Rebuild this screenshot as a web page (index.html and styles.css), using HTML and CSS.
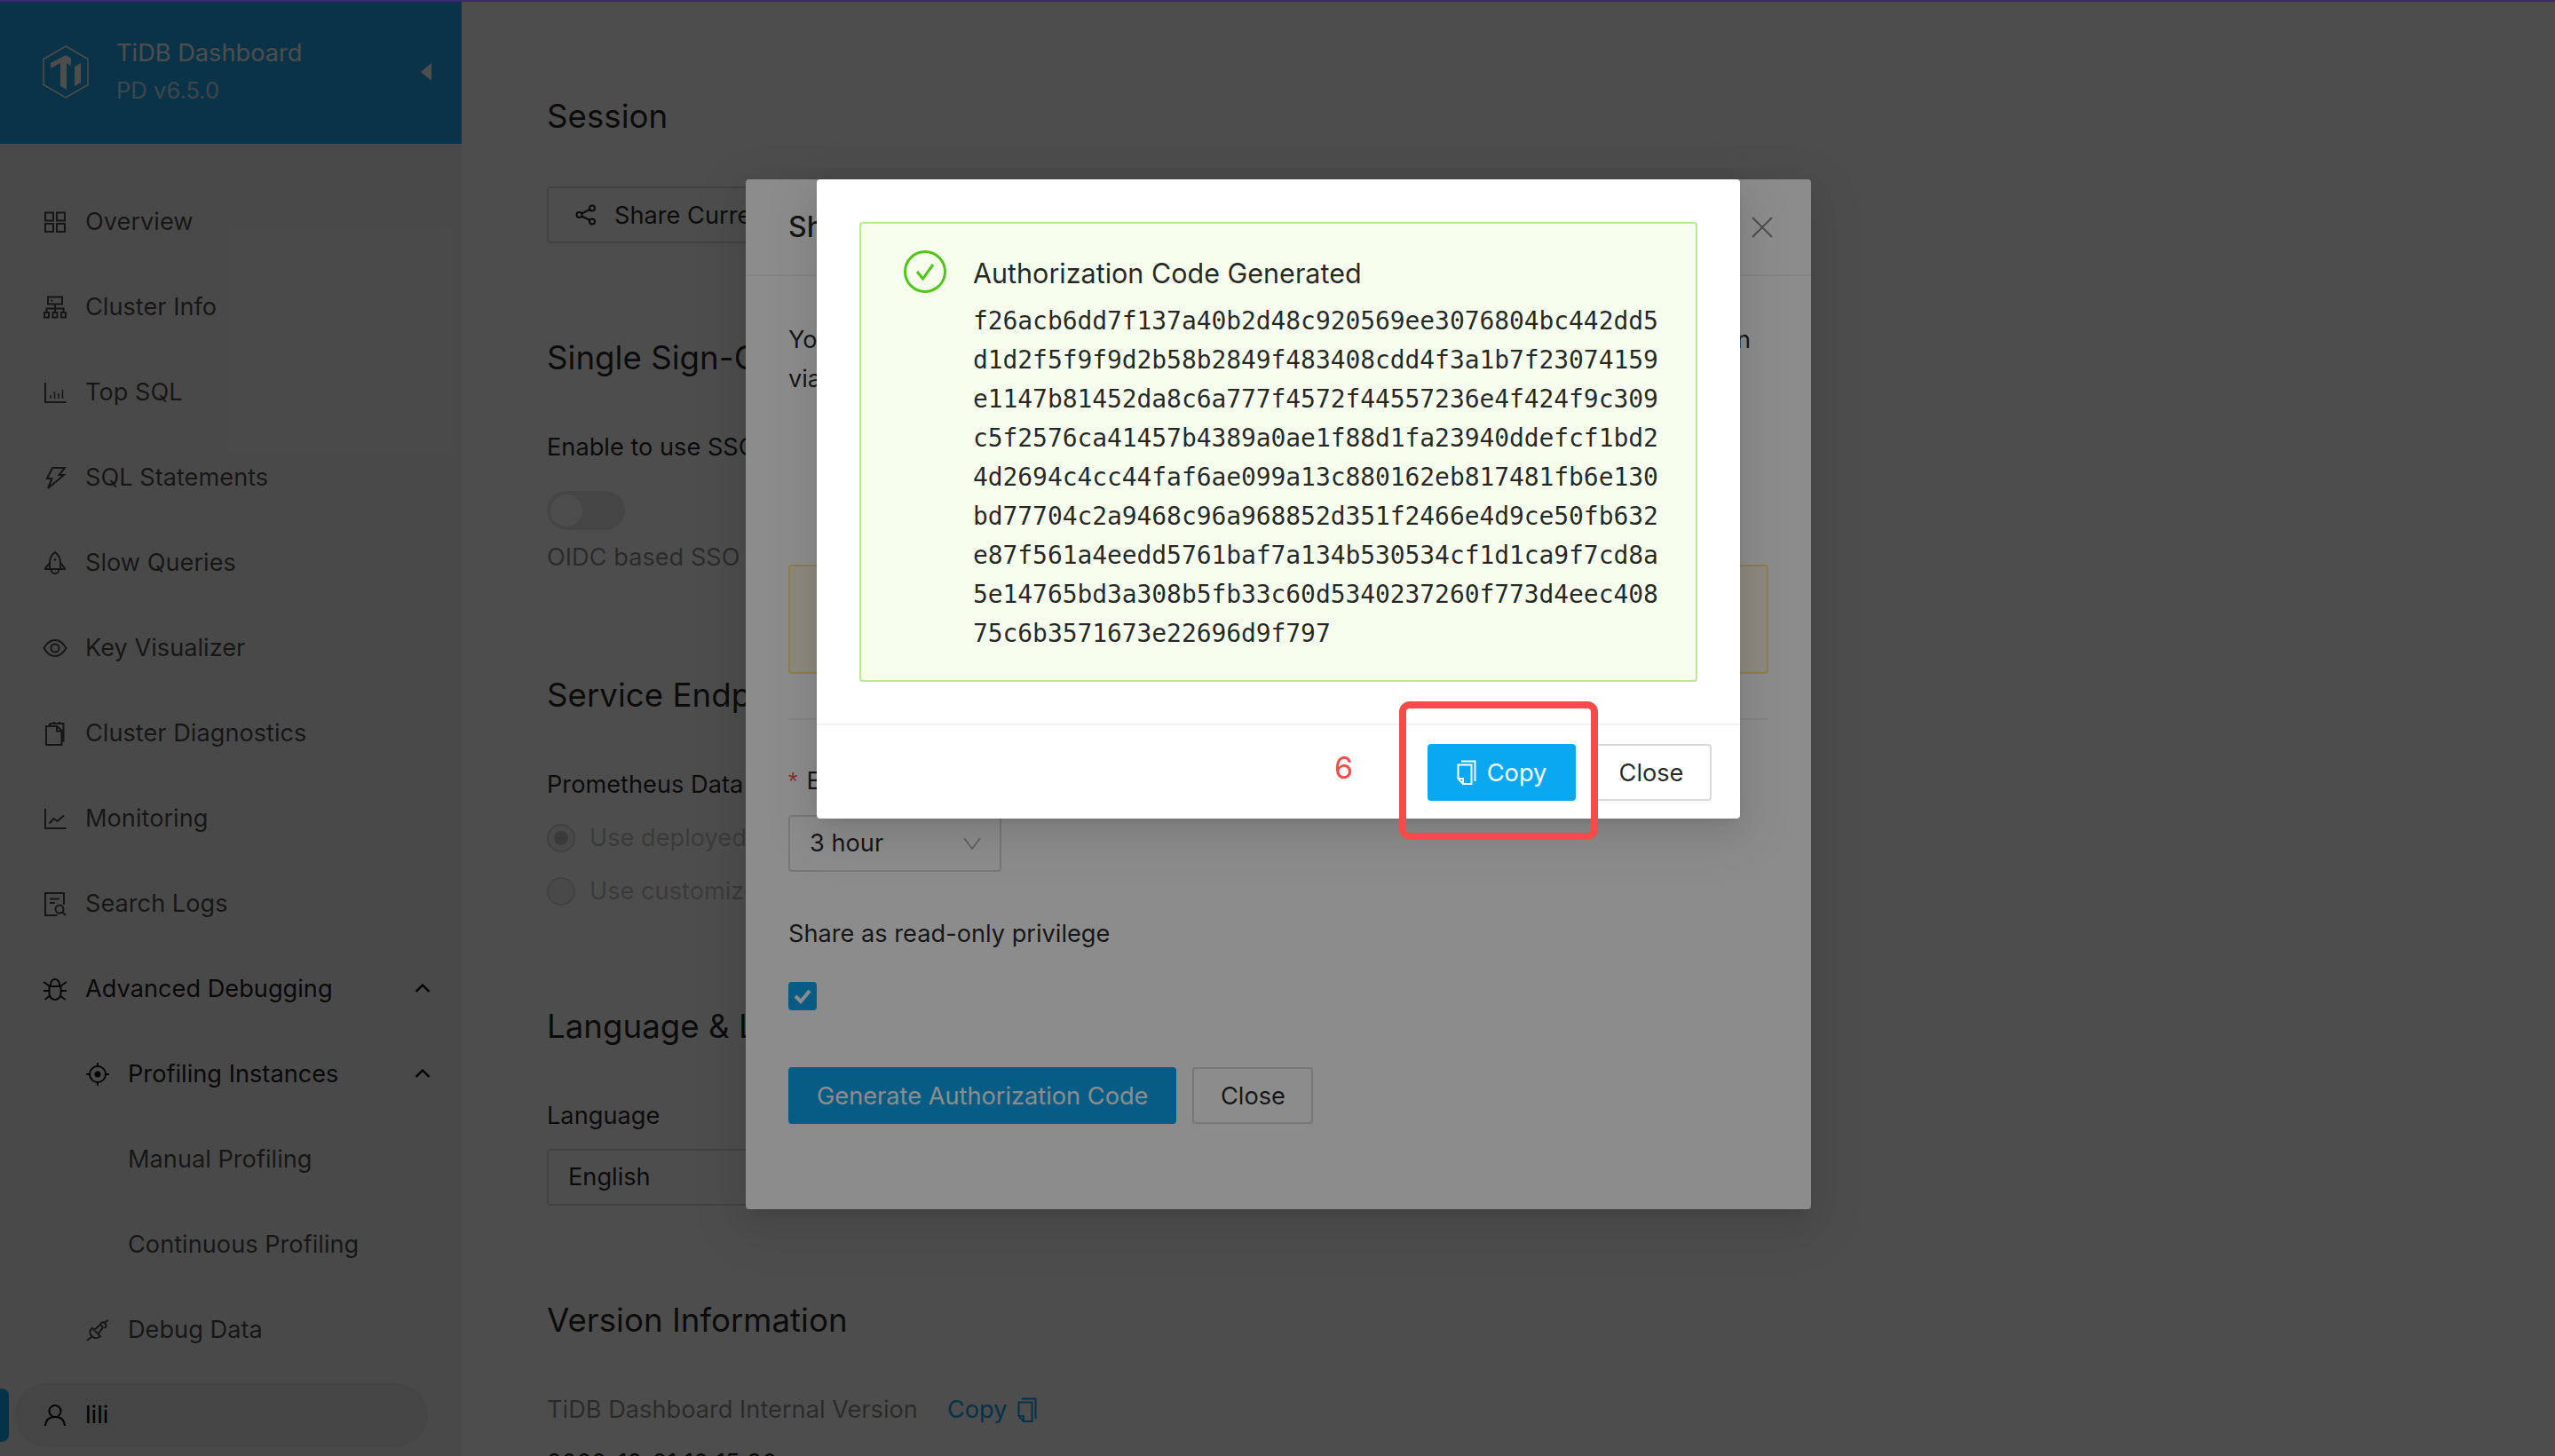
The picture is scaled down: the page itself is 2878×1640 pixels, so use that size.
FILE: index.html
```html
<!DOCTYPE html>
<html lang="en">
<head>
  <meta charset="UTF-8" />
  <title>TiDB Dashboard</title>
  <link rel="stylesheet" href="styles.css">
</head>
<body>
  <div class="app">
    <aside class="sidebar">
      <div class="brand">
        <svg class="brand-logo" viewBox="0 0 52 60">
          <path class="hex" d="M26 1 51 15.500V44.500L26 59 1 44.500V15.500Z"/>
          <path class="ti" d="M9 20 26 11 32 14.500 32 23 27 20.500V50L20 46V20L9 26ZM36 24 43 20V42L36 46Z"/>
        </svg>
        <div class="brand-text">
          <div class="brand-name">TiDB Dashboard</div>
          <div class="brand-version">PD v6.5.0</div>
        </div>
        <span class="brand-toggle"></span>
      </div>

      <nav class="menu">
        <a class="item">
          <svg class="icon" viewBox="0 0 28 28"><path d="M3 3.500h9v9H3zM16 3.500h9v9h-9zM3 16h9v9H3zM16 16h9v9h-9z"/></svg>
          Overview
        </a>
        <a class="item">
          <svg class="icon" viewBox="0 0 28 28"><path d="M6 2.500h16v8H6zM14 10.500v5M4.500 19.500v-4h19v4M14 15.500v4M2 20h5v5.500H2zM11.500 20h5v5.500h-5zM21 20h5v5.500h-5zM9.500 6.500h2"/></svg>
          Cluster Info
        </a>
        <a class="item">
          <svg class="icon" viewBox="0 0 28 28"><path d="M3 3v22h23.500"/><path class="thin" d="M9 21v-4M13.500 21v-8M18 21v-6M22.500 21v-10"/></svg>
          Top SQL
        </a>
        <a class="item">
          <svg class="icon" viewBox="0 0 28 28"><path d="M11 3h14l-6.500 8H24L6 26l4.500-11H5z"/></svg>
          SQL Statements
        </a>
        <a class="item">
          <svg class="icon" viewBox="0 0 28 28"><path d="M14 2c4 3 6 7 6 12v7H8v-7C8 9 10 5 14 2zM8 14l-5 6v1h5M20 14l5 6v1h-5M9.500 21c0 3 2 5 4.500 5s4.500-2 4.500-5"/><circle class="dot" cx="14" cy="10.500" r="1.300"/></svg>
          Slow Queries
        </a>
        <a class="item">
          <svg class="icon" viewBox="0 0 28 28"><path d="M1.500 14C5 8 9 5 14 5s9 3 12.500 9C23 20 19 23 14 23S5 20 1.500 14z"/><circle cx="14" cy="14" r="4.500"/></svg>
          Key Visualizer
        </a>
        <a class="item">
          <svg class="icon" viewBox="0 0 28 28"><path d="M4 6h12.500l5 5v16H4zM16 6v5.500h5.500M8 6V3M8 3h15.500v19.500h-2M13 3V1M19 3V1"/></svg>
          Cluster Diagnostics
        </a>
        <a class="item">
          <svg class="icon" viewBox="0 0 28 28"><path d="M3 3v22h23.500M7.500 19.500l5-5.500 4 3 7.500-6.500"/></svg>
          Monitoring
        </a>
        <a class="item">
          <svg class="icon" viewBox="0 0 28 28"><path d="M24 15V2H3v25h13.500M8 8.500h11M8 13h6"/><circle cx="19" cy="20" r="4.500"/><path d="M22.500 23.500l3.500 3.500"/></svg>
          Search Logs
        </a>
        <a class="item strong">
          <svg class="icon" viewBox="0 0 28 28"><path d="M7.500 11h13v8c0 4-3 7-6.500 7s-6.500-3-6.500-7zM9 11V9c0-3.500 2.500-6 5-6s5 2.500 5 6v2M1 6l6.500 4.500M27 6l-6.500 4.500M1 16h6.500M27 16h-6.500M2.500 26l5-4M25.500 26l-5-4"/></svg>
          Advanced Debugging
          <svg class="chevron" viewBox="0 0 18 12"><path d="M1.500 10 9 2.500 16.500 10"/></svg>
        </a>
        <a class="item strong level-two">
          <svg class="icon" viewBox="0 0 28 28"><circle cx="14" cy="14" r="9"/><circle class="dot" cx="14" cy="14" r="3.500"/><path d="M14 1v5M14 22v5M1 14h5M22 14h5"/></svg>
          Profiling Instances
          <svg class="chevron" viewBox="0 0 18 12"><path d="M1.500 10 9 2.500 16.500 10"/></svg>
        </a>
        <a class="item level-three">Manual Profiling</a>
        <a class="item level-three">Continuous Profiling</a>
        <a class="item level-two">
          <svg class="icon" viewBox="0 0 28 28"><path d="M2 26l6-5M26 3l-5 3M8 12l9 9-1.500 1c-3 2-6 1-8-1s-3-5-1-8zM14.500 18.500 20 11l-3-3-7.500 6.500M17 7c2-2 4-2 5.500-.500S24 10 22 12"/></svg>
          Debug Data
        </a>
        <a class="item selected">
          <svg class="icon" viewBox="0 0 28 28"><circle cx="14" cy="9.500" r="6.500"/><path d="M3 26c.5-6.500 4.500-10 11-10s10.500 3.500 11 10"/></svg>
          lili
        </a>
      </nav>
    </aside>

    <main class="content">
      <h2 class="heading first">Session</h2>
      <button class="btn share-btn">
        <svg class="share-icon" viewBox="0 0 24 24"><circle cx="19" cy="4.500" r="3"/><circle cx="4.500" cy="12" r="3"/><circle cx="19" cy="19.500" r="3"/><path d="M7 10.500 16.500 6M7 13.500l9.500 4.500"/></svg>
        Share Current Session
      </button>

      <h2 class="heading">Single Sign-On</h2>
      <div class="label">Enable to use SSO when sign in</div>
      <div class="toggle"><span class="knob"></span></div>
      <div class="hint">OIDC based SSO is not enabled</div>

      <h2 class="heading service">Service Endpoint</h2>
      <div class="label">Prometheus Data Source</div>
      <div class="radios">
        <div class="radio-row"><span class="radio on"></span>Use deployed address</div>
        <div class="radio-row"><span class="radio"></span>Use customized address</div>
      </div>

      <h2 class="heading language">Language &amp; Localization</h2>
      <div class="label">Language</div>
      <div class="select language-select">English</div>

      <h2 class="heading">Version Information</h2>
      <div class="label version-row">
        <span class="muted">TiDB Dashboard Internal Version</span>
        <span class="link">Copy
          <svg class="copy-icon" viewBox="0 0 22 28"><path d="M5 1.500h15.500V24M1.500 5.500h15V27H7l-5.500-6zM1.500 21H7v6"/></svg>
        </span>
      </div>
      <div class="label version-value">2022-12-21 10:15:30</div>
    </main>
  </div>

  <div class="mask"></div>

  <section class="modal share-modal">
    <header class="modal-head">
      <span>Share TiDB Dashboard</span>
      <svg class="modal-close" viewBox="0 0 24 24"><path d="M1 1l22 22M23 1 1 23"/></svg>
    </header>
    <div class="modal-body">
      <p class="intro">You can generate a shareable authorization code to let other users sign in</p>
      <p class="intro-next">via the authorization code.</p>
      <div class="warning"></div>
      <hr class="divider">
      <div class="label expire"><span class="star">*</span>Expire in</div>
      <div class="select expire-select">
        3 hour
        <svg class="select-arrow" viewBox="0 0 20 14"><path d="M1 1l9 12 9-12"/></svg>
      </div>
      <div class="label readonly">Share as read-only privilege</div>
      <span class="checkbox">
        <svg viewBox="0 0 32 32"><path d="M8 16l6 6 10-12"/></svg>
      </span>
      <div class="modal-actions">
        <button class="btn primary">Generate Authorization Code</button>
        <button class="btn close-btn">Close</button>
      </div>
    </div>
  </section>

  <div class="mask"></div>

  <section class="modal code-modal">
    <div class="code-wrap">
      <div class="success">
        <svg class="success-icon" viewBox="0 0 48 48"><circle cx="24" cy="24" r="22.500"/><path d="M15 24l6.500 8L33 16"/></svg>
        <div class="success-main">
          <div class="success-title">Authorization Code Generated</div>
          <div class="code">f26acb6dd7f137a40b2d48c920569ee3076804bc442dd5
d1d2f5f9f9d2b58b2849f483408cdd4f3a1b7f23074159
e1147b81452da8c6a777f4572f44557236e4f424f9c309
c5f2576ca41457b4389a0ae1f88d1fa23940ddefcf1bd2
4d2694c4cc44faf6ae099a13c880162eb817481fb6e130
bd77704c2a9468c96a968852d351f2466e4d9ce50fb632
e87f561a4eedd5761baf7a134b530534cf1d1ca9f7cd8a
5e14765bd3a308b5fb33c60d5340237260f773d4eec408
75c6b3571673e22696d9f797</div>
        </div>
      </div>
    </div>
    <footer class="code-footer">
      <button class="btn primary copy-btn">
        <svg class="copy-icon" viewBox="0 0 22 28"><path d="M5 1.500h15.500V24M1.500 5.500h15V27H7l-5.500-6zM1.500 21H7v6"/></svg>
        Copy
      </button>
      <button class="btn close-btn">Close</button>
    </footer>
  </section>

  <!-- annotation drawn on top of the screenshot -->
  <div class="step-number">6</div>
  <div class="step-frame"></div>
  <div class="progress"></div>
</body>
</html>
```

FILE: styles.css
```css
* {
  margin: 0;
  padding: 0;
  box-sizing: border-box;
}

html,
body {
  width: 2878px;
  height: 1640px;
  overflow: hidden;
}

body {
  background-color: #ffffff;
  color: rgba(0, 0, 0, 0.85);
  font-family: Inter, "Liberation Sans", sans-serif;
  font-size: 27.2px;
  line-height: 44px;
}

.app {
  display: flex;
  height: 1640px;
}

/* sidebar */
.sidebar {
  width: 520px;
  flex-shrink: 0;
  background-color: #f5f5f5;
}

.brand {
  display: flex;
  align-items: center;
  height: 162px;
  padding: 0 34px 0 48px;
  background-color: #24aaf0;
  color: #ffffff;
}

.brand-logo {
  width: 52px;
  height: 60px;
  margin-right: 31px;
  flex-shrink: 0;
}

.hex {
  fill: none;
  stroke: #ffffff;
  stroke-width: 1.500;
}

.ti {
  fill: #ffffff;
}

.brand-text {
  flex: 1;
}

.brand-name {
  line-height: 40px;
}

.brand-version {
  margin-top: 2px;
  line-height: 40px;
  font-size: 25.6px;
  opacity: 0.75;
}

.brand-toggle {
  width: 0;
  height: 0;
  border-top: 10px solid transparent;
  border-bottom: 10px solid transparent;
  border-right: 12px solid #ffffff;
}

.menu {
  padding-top: 52px;
}

.item {
  position: relative;
  display: flex;
  align-items: center;
  height: 72px;
  margin: 0 38px 24px 16px;
  padding-left: 32px;
  color: rgba(0, 0, 0, 0.7);
  border-radius: 36px;
}

.item.strong {
  color: rgba(0, 0, 0, 0.9);
}

.level-two {
  padding-left: 80px;
}

.level-three {
  padding-left: 128px;
}

.selected {
  color: #000000;
  background-color: #e8e8e8;
}

.selected::before {
  content: "";
  position: absolute;
  left: -16px;
  top: 6px;
  width: 10px;
  height: 60px;
  background-color: #0ba8f2;
  border-radius: 0 8px 8px 0;
}

.icon {
  width: 28px;
  height: 28px;
  margin-right: 20px;
  flex-shrink: 0;
  fill: none;
  stroke: currentColor;
  stroke-width: 2;
}

.icon .thin {
  stroke-width: 1.500;
}

.icon .dot {
  fill: currentColor;
  stroke: none;
}

.chevron {
  position: absolute;
  right: -3px;
  top: 29px;
  width: 18px;
  height: 12px;
  fill: none;
  stroke: currentColor;
  stroke-width: 2.500;
}

/* main column */
.content {
  flex: 1;
  padding-left: 96px;
}

.heading {
  height: 56px;
  margin-top: 101px;
  font-size: 36.7px;
  font-weight: 400;
  line-height: 56px;
}

.heading.first {
  margin-top: 103px;
}

.heading.service {
  margin-top: 105px;
}

.heading.language {
  margin-top: 94px;
}

.label {
  margin-top: 51px;
  white-space: nowrap;
}

.btn {
  display: inline-flex;
  align-items: center;
  justify-content: center;
  height: 64px;
  padding: 0 30px;
  background-color: #ffffff;
  border: 2px solid #d9d9d9;
  border-radius: 4px;
  box-shadow: 0 4px 0 rgba(0, 0, 0, 0.015);
  color: rgba(0, 0, 0, 0.85);
  font-family: inherit;
  font-size: 27.2px;
}

.btn.primary {
  background-color: #0ba8f2;
  border-color: #0ba8f2;
  color: #ffffff;
}

.close-btn {
  width: 136px;
  padding: 0;
}

.share-btn {
  margin-top: 51px;
  width: 420px;
  justify-content: flex-start;
  white-space: nowrap;
}

.share-icon {
  width: 24px;
  height: 24px;
  margin-right: 20px;
  fill: none;
  stroke: currentColor;
  stroke-width: 2;
}

.toggle {
  width: 88px;
  height: 44px;
  margin-top: 27px;
  padding: 4px;
  background-color: #bfbfbf;
  border-radius: 22px;
  opacity: 0.4;
}

.knob {
  display: block;
  width: 36px;
  height: 36px;
  background-color: #ffffff;
  border-radius: 50%;
}

.hint {
  margin-top: 9px;
  color: rgba(0, 0, 0, 0.45);
  white-space: nowrap;
}

.radios {
  margin-top: 8px;
}

.radio-row {
  display: flex;
  align-items: center;
  height: 60px;
  color: rgba(0, 0, 0, 0.25);
  white-space: nowrap;
}

.radio {
  display: flex;
  align-items: center;
  justify-content: center;
  width: 32px;
  height: 32px;
  margin-right: 16px;
  background-color: #f5f5f5;
  border: 2px solid #d9d9d9;
  border-radius: 50%;
}

.radio.on::after {
  content: "";
  width: 16px;
  height: 16px;
  background-color: rgba(0, 0, 0, 0.2);
  border-radius: 50%;
}

.select {
  position: relative;
  display: flex;
  align-items: center;
  height: 64px;
  padding-left: 22px;
  background-color: #ffffff;
  border: 2px solid #d9d9d9;
  border-radius: 4px;
}

.language-select {
  width: 400px;
  margin-top: 15px;
}

.select-arrow {
  position: absolute;
  right: 21px;
  top: 23px;
  width: 20px;
  height: 14px;
  fill: none;
  stroke: rgba(0, 0, 0, 0.3);
  stroke-width: 2;
}

.version-row {
  display: flex;
  gap: 33px;
}

.muted {
  color: rgba(0, 0, 0, 0.45);
}

.link {
  display: flex;
  align-items: center;
  color: #0ba8f2;
}

.link .copy-icon {
  margin-left: 12px;
}

.copy-icon {
  width: 22px;
  height: 28px;
  fill: none;
  stroke: currentColor;
  stroke-width: 2;
}

.version-value {
  margin-top: 16px;
}

/* overlays */
.mask {
  position: absolute;
  inset: 0;
  background-color: rgba(0, 0, 0, 0.45);
}

.modal {
  position: absolute;
  top: 202px;
  background-color: #ffffff;
  border-radius: 4px;
  box-shadow: 0 6px 12px -8px rgba(0, 0, 0, 0.12), 0 12px 32px 0 rgba(0, 0, 0, 0.08), 0 18px 56px 16px rgba(0, 0, 0, 0.05);
}

.share-modal {
  left: 840px;
  width: 1200px;
  height: 1160px;
}

.modal-head {
  position: relative;
  height: 109px;
  padding: 32px 48px 0;
  border-bottom: 2px solid #f0f0f0;
  font-size: 32px;
  font-weight: 500;
}

.modal-close {
  position: absolute;
  right: 43px;
  top: 42px;
  width: 24px;
  height: 24px;
  fill: none;
  stroke: rgba(0, 0, 0, 0.45);
  stroke-width: 2;
}

.modal-body {
  padding: 50px 48px 0;
}

.intro {
  width: 1084px;
  white-space: nowrap;
  text-align: justify;
  text-align-last: justify;
}

.warning {
  height: 123px;
  margin-top: 187px;
  background-color: #fffbe6;
  border: 2px solid #ffe58f;
  border-radius: 4px;
}

.divider {
  margin-top: 50px;
  border: none;
  border-top: 2px solid #f0f0f0;
}

.expire {
  margin-top: 47px;
}

.star {
  margin-right: 10px;
  color: #ff4d4f;
  font-family: "Liberation Sans", sans-serif;
}

.expire-select {
  width: 240px;
  margin-top: 16px;
}

.readonly {
  margin-top: 48px;
}

.checkbox {
  display: block;
  width: 32px;
  height: 32px;
  margin-top: 32px;
  background-color: #0ba8f2;
  border-radius: 4px;
}

.checkbox svg {
  display: block;
  fill: none;
  stroke: #ffffff;
  stroke-width: 4;
}

.modal-actions {
  display: flex;
  gap: 18px;
  margin-top: 64px;
}

.code-modal {
  left: 920px;
  width: 1040px;
  height: 720px;
}

.code-wrap {
  height: 615px;
  padding: 48px 48px 0;
  border-bottom: 2px solid #f0f0f0;
}

.success {
  display: flex;
  height: 518px;
  padding: 30px 0 0 48px;
  background-color: #f6ffed;
  border: 2px solid #b7eb8f;
  border-radius: 4px;
}

.success-icon {
  width: 48px;
  height: 48px;
  margin-right: 30px;
  flex-shrink: 0;
  fill: none;
  stroke: #52c41a;
  stroke-width: 3;
}

.success-title {
  font-size: 30.5px;
  line-height: 48px;
  margin-top: 2px;
}

.code {
  margin-top: 8px;
  font-family: "DejaVu Sans Mono", "Liberation Mono", monospace;
  font-size: 28px;
  letter-spacing: -0.08px;
  line-height: 44px;
  white-space: pre;
}

.code-footer {
  display: flex;
  justify-content: flex-end;
  gap: 17px;
  padding: 21px 32px 0 0;
}

.copy-btn {
  width: 167px;
  padding: 0;
}

.copy-btn .copy-icon {
  margin-right: 12px;
}

.step-number {
  position: absolute;
  left: 1503px;
  top: 843px;
  color: #f64b48;
  font-size: 34px;
}

.step-frame {
  position: absolute;
  left: 1576px;
  top: 790px;
  width: 224px;
  height: 156px;
  border: 8px solid #f64b48;
  border-radius: 12px;
}

.progress {
  position: absolute;
  left: 0;
  top: 0;
  width: 100%;
  height: 2px;
  background-color: #3a2a70;
}
```
